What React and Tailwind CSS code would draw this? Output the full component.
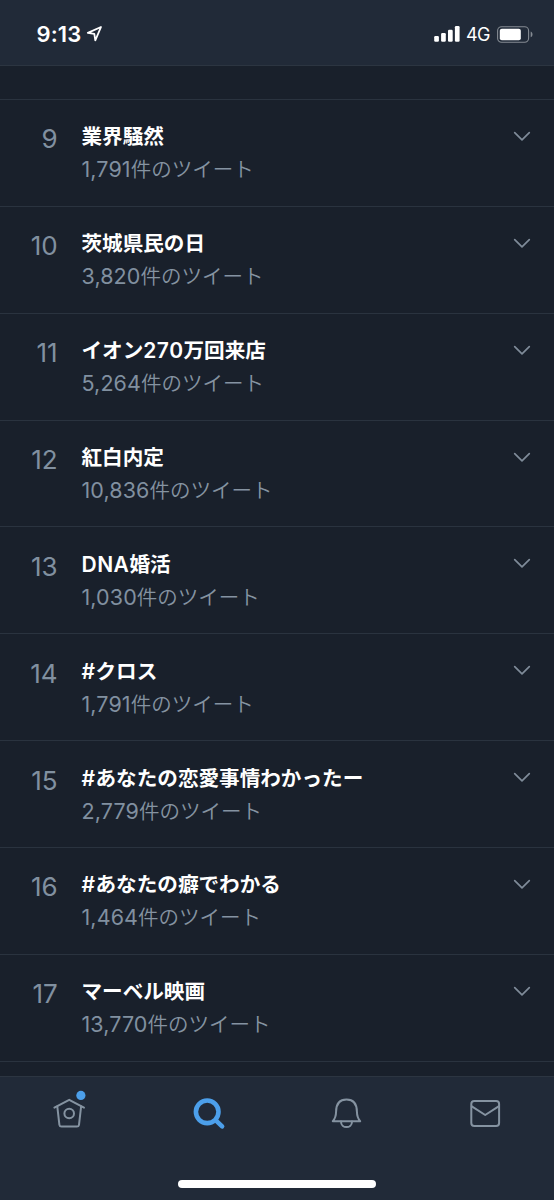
const trends = [
  { rank: 9, title: "業界騒然", count: "1,791" },
  { rank: 10, title: "茨城県民の日", count: "3,820" },
  { rank: 11, title: "イオン270万回来店", count: "5,264" },
  { rank: 12, title: "紅白内定", count: "10,836" },
  { rank: 13, title: "DNA婚活", count: "1,030" },
  { rank: 14, title: "#クロス", count: "1,791" },
  { rank: 15, title: "#あなたの恋愛事情わかったー", count: "2,779" },
  { rank: 16, title: "#あなたの癖でわかる", count: "1,464" },
  { rank: 17, title: "マーベル映画", count: "13,770" },
];

function StatusBar() {
  return (
    <header className="flex h-[66px] shrink-0 items-start justify-between border-b border-[#2c3541] bg-[#212a38] pl-[36.5px] pr-[21px] pt-[22px] text-white">
      <div className="flex h-[24px] items-center">
        <span className="w-[49px] whitespace-nowrap text-[22px] font-semibold leading-[24px] tracking-[0.1px]">9:13</span>
        <svg className="mb-[1px] ml-[0.5px] h-[18px] w-[18px]" viewBox="0 0 18 18" fill="none" stroke="currentColor" strokeWidth="1.8" strokeLinejoin="round">
          <path d="M15 2 L1.8 7.9 L8.3 8.9 L9.3 15.4 Z" />
        </svg>
      </div>
      <div className="flex h-[24px] items-center">
        <svg className="h-[16px] w-[26px]" viewBox="0 0 26 16" fill="currentColor">
          <rect x="0.2" y="10.1" width="4.7" height="5.7" rx="1.2" />
          <rect x="7.1" y="7.1" width="4.7" height="8.7" rx="1.2" />
          <rect x="14" y="3.8" width="4.7" height="12" rx="1.2" />
          <rect x="20.9" y="0" width="4.7" height="15.8" rx="1.2" />
        </svg>
        <span className="ml-[6px] w-[24px] whitespace-nowrap pt-[1px] text-[18px] font-normal leading-[24px] tracking-[-0.6px]">4G</span>
        <svg className="ml-[7px] h-[17px] w-[36px]" viewBox="0 0 36 17">
          <rect x="0.6" y="0.7" width="31" height="15.6" rx="4" fill="none" stroke="#858b93" strokeWidth="1.1" />
          <rect x="2.8" y="2.8" width="21" height="11.4" rx="2" fill="#fff" />
          <path d="M33.7 5.6 C36.1 6.6 36.1 10.3 33.7 11.3 Z" fill="#858b93" />
        </svg>
      </div>
    </header>
  );
}

function MixedTitle({ text }) {
  return text.split(/([A-Za-z0-9#]+)/).filter(Boolean).map((part, i) =>
    /^[A-Za-z0-9#]/.test(part) ? (
      <span key={i} className="text-[21px] tracking-[0.5px]">{part}</span>
    ) : (
      part
    )
  );
}

function TrendRow({ rank, title, count }) {
  return (
    <li className="flex h-[106.9px] items-start border-b border-[#2a333f] pr-[23px] pt-[22.3px]">
      <span className="w-[57.5px] pt-[2px] text-right text-[26px] font-normal leading-[30px] tracking-[-0.1px] text-[#8190a0]">{rank}</span>
      <div className="ml-[24px] grow whitespace-nowrap">
        <p className="h-[31px] text-[20.6px] font-semibold leading-[30px] text-white">
          <MixedTitle text={title} />
        </p>
        <p className="text-[20.5px] font-[350] leading-[32px] text-[#8593a1]">
          <span className="text-[21.5px] font-normal tracking-[0.1px] text-[#8190a0]">{count}</span>件のツイート
        </p>
      </div>
      <svg className="mt-[8.7px] h-[11px] w-[18px]" viewBox="0 0 18 11" fill="none" stroke="#7f8b99" strokeWidth="1.7" strokeLinecap="round" strokeLinejoin="round">
        <path d="M1.7 1.6 L9 8.9 L16.3 1.6" />
      </svg>
    </li>
  );
}

function TabBar() {
  return (
    <footer className="flex h-[124px] shrink-0 flex-col items-center border-t border-[#2c3541] bg-[#212a38]">
      <nav className="grid w-full grid-cols-4 pt-[12px] text-[#8593a1]">
        <div className="flex justify-center">
          <svg className="h-[48px] w-[48px]" viewBox="0 0 48 48" fill="none" stroke="currentColor" strokeWidth="2" strokeLinecap="round" strokeLinejoin="round">
            <path d="M9.4 18.6 L24.2 10.8 L39 18.6" />
            <path d="M12.3 17.5 L14.4 35.8 Q14.7 37.6 16.5 37.6 H31.9 Q33.7 37.6 34 35.8 L36.1 17.5" />
            <circle cx="24.2" cy="24.5" r="4.8" />
            <circle cx="35.9" cy="6.4" r="4.6" fill="#4c9fea" stroke="none" />
          </svg>
        </div>
        <div className="flex justify-center">
          <svg className="h-[48px] w-[48px]" viewBox="0 0 48 48" fill="none" stroke="#4c9fea" strokeWidth="4.6" strokeLinecap="round">
            <circle cx="23.2" cy="22.8" r="11.3" />
            <path d="M31.8 31.4 L38.1 37.4" />
          </svg>
        </div>
        <div className="flex justify-center">
          <svg className="h-[48px] w-[48px]" viewBox="0 0 48 48" fill="none" stroke="currentColor" strokeWidth="2" strokeLinecap="round" strokeLinejoin="round">
            <path d="M10.8 32.2 C13 29.8 14 27.5 14.1 22.5 C14.2 14.5 17.5 10.4 24.5 10.4 C31.5 10.4 34.8 14.5 34.9 22.5 C35 27.5 36 29.8 38.2 32.2 Z" />
            <path d="M19 32.4 C19 40 30 40 30 32.4" />
          </svg>
        </div>
        <div className="flex justify-center">
          <svg className="h-[48px] w-[48px]" viewBox="0 0 48 48" fill="none" stroke="currentColor" strokeWidth="2" strokeLinecap="round" strokeLinejoin="round">
            <rect x="10.3" y="12" width="27.8" height="25" rx="3" />
            <path d="M10.8 17.4 L24.2 26 L37.6 17.4" />
          </svg>
        </div>
      </nav>
      <div className="mt-[43px] h-[8px] w-[198px] rounded-full bg-white" />
    </footer>
  );
}

export default function App() {
  return (
    <div className="flex h-[1200px] w-[554px] flex-col overflow-hidden bg-[#19202b] font-['Inter','Noto_Sans_CJK_JP',sans-serif]">
      <StatusBar />
      <main className="min-h-0 grow overflow-hidden">
        <div className="h-[33.87px] border-b border-[#2a333f]" />
        <ul>
          {trends.map((trend) => (
            <TrendRow key={trend.rank} {...trend} />
          ))}
        </ul>
      </main>
      <TabBar />
    </div>
  );
}
